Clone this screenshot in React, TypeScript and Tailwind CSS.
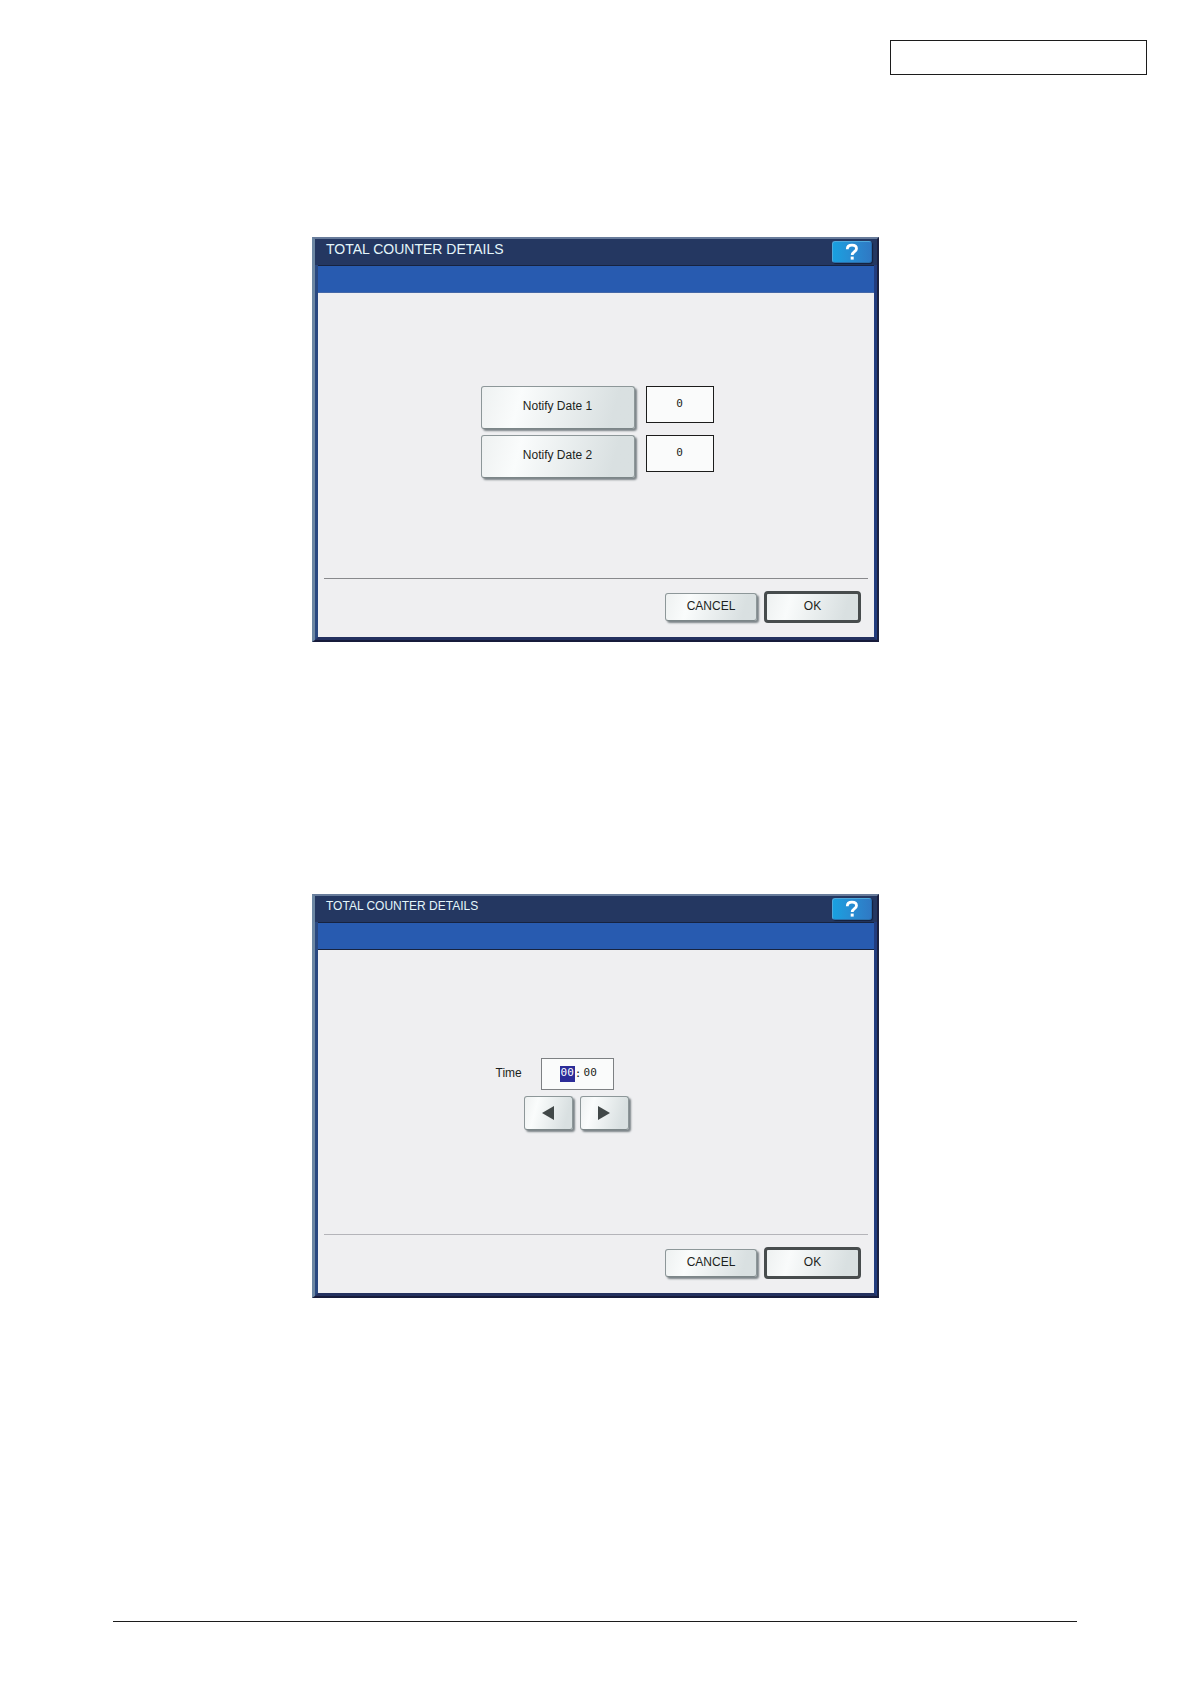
import React, { useState } from 'react';
import clsx from 'clsx';

interface PanelProps {
  title: string;
  titleClass: string;
  bandClass: string;
  ruleClass: string;
  children: React.ReactNode;
}

interface KeyProps {
  className?: string;
  label?: string;
  onClick?: () => void;
  children: React.ReactNode;
}

const NOTIFY_DATES = ['Notify Date 1', 'Notify Date 2'];

// Raised grey key used all over the touch panel
const Key: React.FC<KeyProps> = ({ className, label, onClick, children }) => (
  <button
    type="button"
    aria-label={label}
    onClick={onClick}
    className={clsx(
      'flex items-center justify-center rounded-[3px] border border-[#8d9799] border-b-[#7c8688] bg-linear-105 from-[#eef1f1] via-[#fafcfc] via-25% to-[#d9e0e1] to-85% shadow-[2px_2px_2px_#7b8387]',
      className
    )}
  >
    {children}
  </button>
);

const Panel: React.FC<PanelProps> = ({ title, titleClass, bandClass, ruleClass, children }) => (
  <section className="w-full max-w-[567px] border-t-2 border-r-2 border-b-2 border-l-3 border-t-[#687c9b] border-r-[#1b2140] border-b-[#171b3a] border-l-[#6c87a3]">
    <header className="flex h-[26px] items-start justify-between bg-[#243761] pr-[5px] pl-[11px]">
      <h2 className={clsx('leading-5 text-[#e4f6fb]', titleClass)}>{title}</h2>
      <button
        type="button"
        aria-label="Help"
        className="mt-0.5 flex h-[22px] w-10 items-center justify-center rounded-[3px] border border-t-[#4fa9dc] border-r-[#2668a8] border-b-[#2a6ea9] border-l-[#4fa9dc] bg-linear-to-r from-[#18a0e0] to-[#2f79c4] shadow-[1px_1px_1px_#14213f]"
      >
        <svg width="14" height="18" viewBox="0 0 14 18" fill="none" aria-hidden="true">
          <path d="M2.3 6.2C2.3 3.6 4.2 2.2 7 2.2s4.5 1.4 4.5 3.6c0 2.8-4.3 3-4.3 6.2" stroke="#fff" strokeWidth="2.8" />
          <rect x="5.7" y="13.6" width="3" height="3" fill="#fff" />
        </svg>
      </button>
    </header>
    <div className="border-r-3 border-b-3 border-l-3 border-r-[#223c7e] border-b-[#24315f] border-l-[#294880]">
      <div className={clsx('h-7 border-t border-b border-t-[#17233f] bg-[#285bb0]', bandClass)} />
      <div className="bg-[#efeff1]">
        {children}
        <footer
          className={clsx('mx-1.5 flex items-center justify-end gap-[7px] border-t pt-3 pr-[7px] pb-3.5', ruleClass)}
        >
          <Key className="h-7 w-[92px] pb-0.5 text-[12px]">CANCEL</Key>
          <button
            type="button"
            className="flex h-8 w-[97px] items-center justify-center rounded-[4px] border-3 border-[#474c4d] bg-linear-105 from-[#eef1f1] via-[#f9fbfb] via-25% to-[#d9e0e1] to-85% pb-0.5 text-[12px]"
          >
            OK
          </button>
        </footer>
      </div>
    </div>
  </section>
);

export default function App() {
  const [part, setPart] = useState<'hour' | 'minute'>('hour');

  const partClass = (active: boolean) =>
    clsx('h-4 w-[15px] pb-1 text-center outline-none', active && 'bg-[#2c2c98] text-white');

  return (
    <div className="flex min-h-screen flex-col bg-white font-['Liberation_Sans',Arial,sans-serif] text-[#1c1f20]">
      <div className="flex justify-end pt-10 pr-11">
        <div className="h-[35px] w-[257px] border border-[#1c1c1c]" />
      </div>

      <main className="flex flex-col items-center gap-[252px] pt-[162px]">
        <Panel
          title="TOTAL COUNTER DETAILS"
          titleClass="text-[14px]"
          bandClass="border-b-[#4468a8]"
          ruleClass="border-[#88898c]"
        >
          <div className="flex flex-col items-center gap-1.5 pt-[93px] pb-[100px] pl-0.5">
            {NOTIFY_DATES.map((name) => (
              <div key={name} className="flex items-start gap-[11px]">
                <Key className="h-[43px] w-[154px] pb-1 text-[12px]">{name}</Key>
                <input
                  aria-label={name}
                  defaultValue="0"
                  className="h-[37px] w-[68px] border border-[#1c1c1c] bg-[#fafbfb] pb-0.5 text-center font-['DejaVu_Sans_Mono',monospace] text-[11px] outline-none"
                />
              </div>
            ))}
          </div>
        </Panel>

        <Panel
          title="TOTAL COUNTER DETAILS"
          titleClass="text-[12px]"
          bandClass="border-b-[#17233f]"
          ruleClass="border-[#b4b4b9]"
        >
          <div className="flex justify-center pt-[108px] pr-[68px] pb-[104px]">
            <div className="flex flex-col gap-1.5">
              <div className="flex gap-[19px]">
                <label htmlFor="hour" className="pt-1.5 text-[12px] leading-[18px]">
                  Time
                </label>
                <div className="flex h-8 w-[73px] items-start border border-[#7d8083] bg-[#fafbfb] pt-[7px] pl-[18px] font-['DejaVu_Sans_Mono',monospace] text-[11px] leading-3">
                  <input
                    id="hour"
                    defaultValue="00"
                    onFocus={() => setPart('hour')}
                    className={partClass(part === 'hour')}
                  />
                  <span className="w-2 pt-0.5 leading-3">:</span>
                  <input
                    aria-label="Minutes"
                    defaultValue="00"
                    onFocus={() => setPart('minute')}
                    className={partClass(part === 'minute')}
                  />
                </div>
              </div>
              <div className="flex gap-[7px] pl-7">
                <Key label="Previous" className="h-[34px] w-[49px]" onClick={() => setPart('hour')}>
                  <svg width="12" height="14" viewBox="0 0 12 14" fill="#414848" aria-hidden="true">
                    <path d="M12 0v14L0 7z" />
                  </svg>
                </Key>
                <Key label="Next" className="h-[34px] w-[49px]" onClick={() => setPart('minute')}>
                  <svg width="12" height="14" viewBox="0 0 12 14" fill="#414848" aria-hidden="true">
                    <path d="M0 0v14l12-7z" />
                  </svg>
                </Key>
              </div>
            </div>
          </div>
        </Panel>
      </main>

      <hr className="mt-auto mr-[114px] mb-[62px] ml-[113px] border-[#1c1c1c]" />
    </div>
  );
}
